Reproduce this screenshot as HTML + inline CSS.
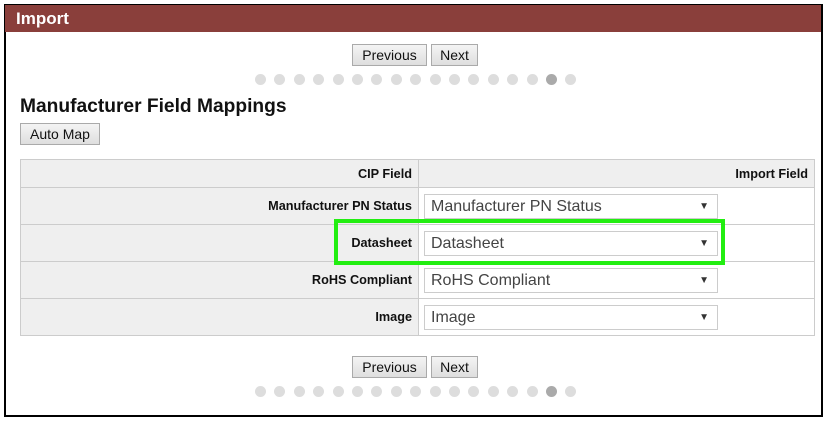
<!DOCTYPE html>
<html><head><meta charset="utf-8"><style>
*{margin:0;padding:0;box-sizing:border-box}
body{width:835px;height:424px;background:#fff;position:relative;overflow:hidden;font-family:"Liberation Sans",sans-serif}
.frame{position:absolute;left:4px;top:4px;width:819px;height:413px;border:2px solid #000;border-top-width:1px}
.hdr{position:absolute;left:5px;top:5px;width:816px;height:27px;background:#8a3f3b;color:#fff;font-weight:bold;font-size:17px;padding:4px 0 0 11px}
.btn{position:absolute;height:22px;border:1px solid #aaa;background:linear-gradient(#f4f4f4,#dedede);font-size:14px;color:#111;text-align:center;line-height:20px}
.dots{position:absolute;height:11px}
.dots span{position:absolute;top:0;width:11px;height:11px;border-radius:50%;background:#ddd}
.dots span.a{background:#aaa}
h2{position:absolute;left:20px;top:96px;font-size:19.2px;font-weight:bold;color:#111}
table{position:absolute;left:20px;top:159px;width:795px;border-collapse:collapse}
td{border:1px solid #ccc;font-size:12.7px;font-weight:bold;color:#111}
td.l{width:398px;background:#efefef;text-align:right;padding-right:6px}
td.r{background:#fff;padding-left:5px}
tr.h td{height:28px;background:#efefef;text-align:right;padding-right:6px}
tr.row td{height:37px}
.sel{width:294px;height:25px;border:1px solid #ccc;font-size:16px;font-weight:normal;color:#444;padding:3px 6px;position:relative}
.sel:after{content:"▼";position:absolute;right:8px;top:6px;font-size:10px;color:#333}
.green{position:absolute;left:334px;top:219px;width:391px;height:46px;border:4px solid #22ee11}
</style></head><body>
<div class="frame"></div>
<div class="hdr">Import</div>
<div class="btn" style="left:352px;top:44px;width:75px">Previous</div>
<div class="btn" style="left:431px;top:44px;width:47px">Next</div>
<div class="dots" id="d1" style="left:255px;top:74px"></div>
<h2>Manufacturer Field Mappings</h2>
<div class="btn" style="left:20px;top:123px;width:80px">Auto Map</div>
<table>
<tr class="h"><td>CIP Field</td><td>Import Field</td></tr>
<tr class="row"><td class="l">Manufacturer PN Status</td><td class="r"><div class="sel">Manufacturer PN Status</div></td></tr>
<tr class="row"><td class="l">Datasheet</td><td class="r"><div class="sel">Datasheet</div></td></tr>
<tr class="row"><td class="l">RoHS Compliant</td><td class="r"><div class="sel">RoHS Compliant</div></td></tr>
<tr class="row"><td class="l">Image</td><td class="r"><div class="sel">Image</div></td></tr>
</table>
<div class="green"></div>
<div class="btn" style="left:352px;top:356px;width:75px">Previous</div>
<div class="btn" style="left:431px;top:356px;width:47px">Next</div>
<div class="dots" id="d2" style="left:255px;top:386px"></div>
<script>
['d1','d2'].forEach(function(id){var d=document.getElementById(id),h='';for(var i=0;i<17;i++)h+='<span class="'+(i==15?'a':'')+'" style="left:'+(i*19.4)+'px"></span>';d.innerHTML=h;});
</script>
</body></html>
